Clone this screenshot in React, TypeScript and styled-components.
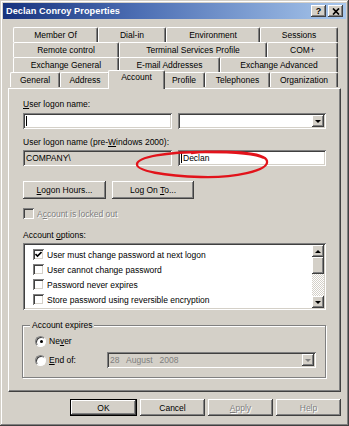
import React from "react";
import styled, { createGlobalStyle } from "styled-components";

const face = "#d4d0c8";
const shadow = "#808080";
const dark = "#404040";
const light = "#ffffff";

const raised = `inset -1px -1px ${dark}, inset 1px 1px ${light}, inset -2px -2px ${shadow}, inset 2px 2px ${face}`;
const sunken = `inset 1px 1px ${shadow}, inset -1px -1px ${light}, inset 2px 2px ${dark}, inset -2px -2px ${face}`;

const GlobalStyle = createGlobalStyle`
  html, body { margin: 0; padding: 0; background: ${face}; }
  body {
    font-family: "Liberation Sans", Arial, sans-serif;
    font-size: 8.5px;
    color: #000;
  }
  * { box-sizing: border-box; }
`;

const Window = styled.div`
  position: relative;
  width: 349px;
  height: 426px;
  padding: 3px 3px 0;
  background: ${face};
  box-shadow: inset -1px -1px ${dark}, inset 1px 1px ${face}, inset -2px -2px ${shadow}, inset 2px 2px ${light};
  display: flex;
  flex-direction: column;
`;

const TitleBar = styled.div`
  height: 16px;
  display: flex;
  align-items: center;
  gap: 2px;
  padding: 0 3px 0 3px;
  background: linear-gradient(90deg, #17337e 0%, #4d6fb4 40%, #a8c7ec 100%);
`;

const Title = styled.div`
  flex: 1;
  color: #fff;
  font-weight: bold;
  font-size: 9.2px;
  letter-spacing: 0.05px;
`;

const TitleButton = styled.div`
  width: 15px;
  height: 12px;
  background: ${face};
  box-shadow: ${raised};
  display: flex;
  align-items: center;
  justify-content: center;
  font-weight: bold;
  font-size: 9px;
  line-height: 12px;
`;

const Body = styled.div`
  padding: 8px 5px 0;
  display: flex;
  flex-direction: column;
`;

const TabRow = styled.div<{ $front?: boolean }>`
  display: flex;
  height: ${(p) => (p.$front ? 16 : 15)}px;
  margin: 0 3px 0 ${(p) => (p.$front ? 2 : 5)}px;
`;

const Tab = styled.div<{ $w: number; $active?: boolean }>`
  flex: 0 0 ${(p) => (p.$active ? p.$w + 4 : p.$w)}px;
  height: ${(p) => (p.$active ? 19 : 15)}px;
  margin: ${(p) => (p.$active ? "-2px -2px 0 -2px" : "0")};
  position: relative;
  z-index: ${(p) => (p.$active ? 2 : 0)};
  background: ${face};
  border-top: 1px solid ${light};
  border-left: 1px solid ${light};
  border-right: 1px solid ${dark};
  box-shadow: inset -1px 0 ${shadow};
  border-radius: 2px 2px 0 0;
  text-align: center;
  line-height: ${(p) => (p.$active ? 13 : 14)}px;
  white-space: nowrap;
  overflow: hidden;
`;

const Panel = styled.div`
  position: relative;
  z-index: 1;
  height: 304px;
  background: ${face};
  border-top: 1px solid ${light};
  border-left: 1px solid ${light};
  border-right: 1px solid ${dark};
  border-bottom: 1px solid ${dark};
  box-shadow: inset -1px -1px ${shadow};
  padding: 10px 14px 0 14px;
  display: flex;
  flex-direction: column;
`;

const Label = styled.div<{ $mt?: number; $disabled?: boolean }>`
  height: 10px;
  line-height: 10px;
  margin-top: ${(p) => p.$mt ?? 0}px;
  color: ${(p) => (p.$disabled ? shadow : "#000")};
  text-shadow: ${(p) => (p.$disabled ? `1px 1px ${light}` : "none")};
  white-space: nowrap;
`;

const FieldRow = styled.div<{ $mt: number }>`
  display: grid;
  grid-template-columns: 149px 1fr;
  gap: 6px;
  margin-top: ${(p) => p.$mt}px;
  height: 16px;
`;

const Field = styled.div<{ $readonly?: boolean; $disabled?: boolean }>`
  position: relative;
  height: 16px;
  background: ${(p) => (p.$readonly || p.$disabled ? face : "#fff")};
  box-shadow: ${sunken};
  padding: 0 2px 0 3px;
  display: flex;
  align-items: center;
  white-space: pre;
  color: ${(p) => (p.$disabled ? shadow : "#000")};
`;

const Caret = styled.span`
  display: inline-block;
  width: 1px;
  height: 10px;
  background: #000;
  margin-right: 1px;
`;

const DropButton = styled.div<{ $disabled?: boolean }>`
  position: absolute;
  right: 2px;
  top: 2px;
  width: 12px;
  height: 12px;
  background: ${face};
  box-shadow: ${raised};
  display: flex;
  align-items: center;
  justify-content: center;
  &::after {
    content: "";
    border-left: 3px solid transparent;
    border-right: 3px solid transparent;
    border-top: 3px solid ${(p) => (p.$disabled ? shadow : "#000")};
    margin-top: 1px;
  }
`;

const ButtonRow = styled.div<{ $mt: number; $end?: boolean }>`
  display: flex;
  gap: ${(p) => (p.$end ? 3 : 6)}px;
  margin-top: ${(p) => p.$mt}px;
  justify-content: ${(p) => (p.$end ? "flex-end" : "flex-start")};
`;

const Button = styled.div<{ $w: number; $h?: number; $disabled?: boolean; $default?: boolean }>`
  width: ${(p) => p.$w}px;
  height: ${(p) => p.$h ?? 17}px;
  background: ${face};
  box-shadow: ${(p) =>
    p.$default
      ? `inset 0 0 0 1px #000, inset -2px -2px ${dark}, inset 2px 2px ${light}, inset -3px -3px ${shadow}`
      : raised};
  display: flex;
  align-items: center;
  justify-content: center;
  color: ${(p) => (p.$disabled ? shadow : "#000")};
  text-shadow: ${(p) => (p.$disabled ? `1px 1px ${light}` : "none")};
`;

const CheckRow = styled.div<{ $mt?: number; $disabled?: boolean }>`
  display: flex;
  align-items: center;
  gap: 3px;
  height: 15px;
  margin-top: ${(p) => p.$mt ?? 0}px;
  color: ${(p) => (p.$disabled ? shadow : "#000")};
  text-shadow: ${(p) => (p.$disabled ? `1px 1px ${light}` : "none")};
  white-space: nowrap;
`;

const Box = styled.div<{ $disabled?: boolean }>`
  width: 11px;
  height: 11px;
  flex: none;
  background: ${(p) => (p.$disabled ? face : "#fff")};
  box-shadow: ${sunken};
  display: flex;
  align-items: center;
  justify-content: center;
`;

const Radio = styled.div<{ $on?: boolean }>`
  width: 11px;
  height: 11px;
  flex: none;
  border-radius: 50%;
  background: #fff;
  border: 1px solid;
  border-color: ${shadow} ${light} ${light} ${shadow};
  box-shadow: inset 1px 1px ${dark};
  display: flex;
  align-items: center;
  justify-content: center;
  &::after {
    content: "";
    display: ${(p) => (p.$on ? "block" : "none")};
    width: 3px;
    height: 3px;
    border-radius: 50%;
    background: #000;
    margin: 1px 0 0 1px;
  }
`;

const ListBox = styled.div`
  margin-top: 3px;
  height: 67px;
  background: #fff;
  box-shadow: ${sunken};
  padding: 2px;
  display: flex;
`;

const ListItems = styled.div`
  flex: 1;
  padding: 2px 0 0 8px;
`;

const ScrollBar = styled.div`
  width: 12px;
  display: flex;
  flex-direction: column;
  background-color: #ebe9e5;
  background-image: repeating-conic-gradient(${face} 0 25%, #fff 0 50%);
  background-size: 2px 2px;
`;

const ScrollButton = styled.div<{ $up?: boolean; $h?: number }>`
  height: ${(p) => p.$h ?? 12}px;
  background: ${face};
  box-shadow: ${raised};
  display: flex;
  align-items: center;
  justify-content: center;
  &::after {
    content: "";
    display: ${(p) => (p.$h ? "none" : "block")};
    border-left: 3px solid transparent;
    border-right: 3px solid transparent;
    ${(p) => (p.$up ? "border-bottom: 3px solid #000;" : "border-top: 3px solid #000;")}
  }
`;

const Spacer = styled.div`
  flex: 1;
`;

const Group = styled.div`
  margin: 15px 0 0 -1px;
  height: 53px;
  border: 1px solid ${shadow};
  box-shadow: 1px 1px 0 ${light}, inset 1px 1px 0 ${light};
  padding: 0 9px 0 12px;
  display: flex;
  flex-direction: column;
`;

const Legend = styled.div`
  width: fit-content;
  margin: -6px 0 0 -5px;
  padding: 0 2px;
  background: ${face};
  height: 10px;
  line-height: 10px;
`;

const ExpiresRow = styled.div<{ $mt: number }>`
  display: flex;
  align-items: center;
  height: 16px;
  margin-top: ${(p) => p.$mt}px;
`;

const RadioLabel = styled.div`
  display: flex;
  align-items: center;
  gap: 3px;
  width: 72px;
`;

const DateField = styled(Field)`
  width: 209px;
`;

const Ellipse = styled.svg`
  position: absolute;
  z-index: 5;
  left: 133px;
  top: 149px;
  width: 140px;
  height: 31px;
  pointer-events: none;
`;

const Check = () => (
  <svg width="7" height="7" viewBox="0 0 7 7">
    <path d="M0.5 3 L2.5 5 L6.5 1" stroke="#000" strokeWidth="1.6" fill="none" />
  </svg>
);

const tabRows: { label: string; w: number; active?: boolean }[][] = [
  [
    { label: "Member Of", w: 85 },
    { label: "Dial-in", w: 68 },
    { label: "Environment", w: 94 },
    { label: "Sessions", w: 78 },
  ],
  [
    { label: "Remote control", w: 106 },
    { label: "Terminal Services Profile", w: 148 },
    { label: "COM+", w: 71 },
  ],
  [
    { label: "Exchange General", w: 106 },
    { label: "E-mail Addresses", w: 101 },
    { label: "Exchange Advanced", w: 118 },
  ],
  [
    { label: "General", w: 50 },
    { label: "Address", w: 50 },
    { label: "Account", w: 53, active: true },
    { label: "Profile", w: 42 },
    { label: "Telephones", w: 65 },
    { label: "Organization", w: 68 },
  ],
];

const options = [
  { label: "User must change password at next logon", checked: true },
  { label: "User cannot change password" },
  { label: "Password never expires" },
  { label: "Store password using reversible encryption" },
];

export default function App() {
  return (
    <>
      <GlobalStyle />
      <Window>
        <TitleBar>
          <Title>Declan Conroy Properties</Title>
          <TitleButton>?</TitleButton>
          <TitleButton>
            <svg width="8" height="7" viewBox="0 0 8 7">
              <path d="M1 0.5 L7 6.5 M7 0.5 L1 6.5" stroke="#000" strokeWidth="1.7" />
            </svg>
          </TitleButton>
        </TitleBar>
        <Body>
          {tabRows.map((row, i) => (
            <TabRow key={i} $front={i === 3}>
              {row.map((t) => (
                <Tab key={t.label} $w={t.w} $active={t.active}>
                  {t.label}
                </Tab>
              ))}
            </TabRow>
          ))}
          <Panel>
            <Label>
              <u>U</u>ser logon name:
            </Label>
            <FieldRow $mt={4}>
              <Field>
                <Caret />
              </Field>
              <Field>
                <DropButton />
              </Field>
            </FieldRow>
            <Label $mt={8}>
              User logon name (pre-<u>W</u>indows 2000):
            </Label>
            <FieldRow $mt={3}>
              <Field $readonly>COMPANY\</Field>
              <Field>
                <Caret />
                Declan
              </Field>
            </FieldRow>
            <ButtonRow $mt={15}>
              <Button $w={83} $h={18}>
                <span>
                  <u>L</u>ogon Hours...
                </span>
              </Button>
              <Button $w={82} $h={18}>
                <span>
                  Log On <u>T</u>o...
                </span>
              </Button>
            </ButtonRow>
            <CheckRow $mt={7} $disabled>
              <Box $disabled />
              <span>
                A<u>c</u>count is locked out
              </span>
            </CheckRow>
            <Label $mt={9}>
              Account <u>o</u>ptions:
            </Label>
            <ListBox>
              <ListItems>
                {options.map((o) => (
                  <CheckRow key={o.label}>
                    <Box>{o.checked && <Check />}</Box>
                    <span>{o.label}</span>
                  </CheckRow>
                ))}
              </ListItems>
              <ScrollBar>
                <ScrollButton $up />
                <ScrollButton $h={17} />
                <Spacer />
                <ScrollButton />
              </ScrollBar>
            </ListBox>
            <Group>
              <Legend>Account expires</Legend>
              <ExpiresRow $mt={3}>
                <RadioLabel>
                  <Radio $on />
                  <span>
                    Ne<u>v</u>er
                  </span>
                </RadioLabel>
              </ExpiresRow>
              <ExpiresRow $mt={3}>
                <RadioLabel>
                  <Radio />
                  <span>
                    <u>E</u>nd of:
                  </span>
                </RadioLabel>
                <DateField $disabled>
                  {"28   August   2008"}
                  <DropButton $disabled />
                </DateField>
              </ExpiresRow>
            </Group>
          </Panel>
          <ButtonRow $mt={7} $end>
            <Button $w={67} $default>
              OK
            </Button>
            <Button $w={65}>Cancel</Button>
            <Button $w={65} $disabled>
              <span>
                <u>A</u>pply
              </span>
            </Button>
            <Button $w={65} $disabled>
              Help
            </Button>
          </ButtonRow>
        </Body>
        <Ellipse viewBox="0 0 140 31">
          <path
            d="M58 4 C 92 1, 132 3, 134 12 C 136 22, 100 29, 68 28 C 32 27, 3 22, 4 15 C 5 8, 32 3, 72 3 C 100 3, 124 5, 131 9"
            stroke="#e2131b"
            strokeWidth="2.3"
            fill="none"
          />
        </Ellipse>
      </Window>
    </>
  );
}
